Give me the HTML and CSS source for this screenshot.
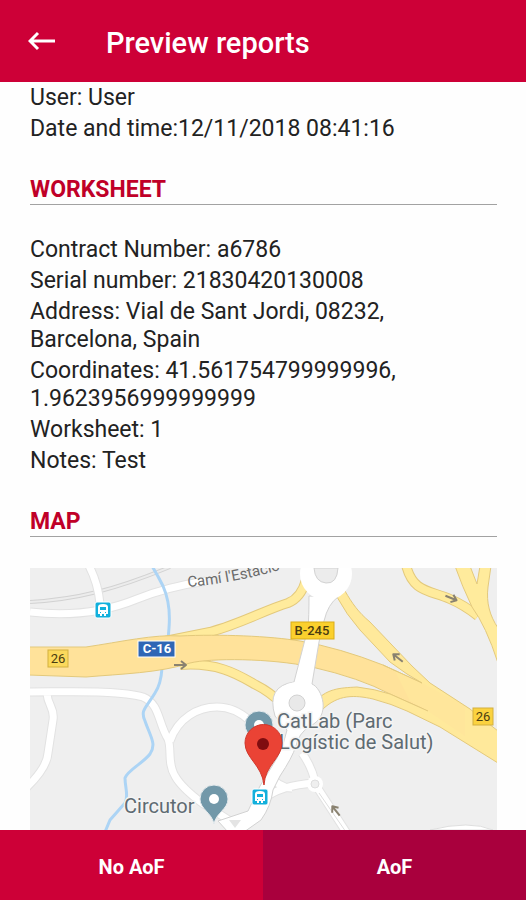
FILE: index.html
```html
<!DOCTYPE html>
<html lang="en">
<head>
  <meta charset="UTF-8" />
  <meta name="viewport" content="width=device-width, initial-scale=1.0" />
  <title>Preview reports</title>
  <link rel="stylesheet" href="styles.css">
</head>
<body>
  <header class="app-bar">
    <a class="back" href="#" aria-label="Back">
      <svg width="28" height="20" viewBox="0 0 28 20" aria-hidden="true">
        <path d="M27 10H2M10 2L2 10l8 8" />
      </svg>
    </a>
    <h1>Preview reports</h1>
  </header>

  <main class="report">
    <p>User: User</p>
    <p>Date and time:12/11/2018 08:41:16</p>

    <h2>WORKSHEET</h2>
    <p>Contract Number: a6786</p>
    <p>Serial number: 21830420130008</p>
    <p>Address: Vial de Sant Jordi, 08232, Barcelona, Spain</p>
    <p>Coordinates: 41.561754799999996, 1.9623956999999999</p>
    <p>Worksheet: 1</p>
    <p>Notes: Test</p>

    <h2>MAP</h2>
    <svg class="map" viewBox="0 0 467 262" role="img" aria-label="Map of the site">
      <defs>
        <g id="bus">
          <rect x="-8" y="-8" width="16" height="16" rx="2" fill="#12b0dc" stroke="#fff" />
          <path d="M-5 4v-7q0-3 5-3t5 3v7h-2v2h-2v-2h-2v2h-2v-2z" fill="#fff" />
          <path d="M-3 -3h6v3h-6zM-3 2h1v1h-1zM2 2h1v1h-1z" fill="#12b0dc" />
        </g>
        <g id="poi">
          <path d="M0 25C-2 14-14 10-14 0a14 14 0 0 1 28 0C14 10 2 14 0 25z" fill="#7298a9" stroke="#e4eaed" />
          <circle r="5" fill="#fff" />
        </g>
        <path id="arrow" d="M-6 0H6M1-4l5 4-5 4" />
        <path id="cami" d="M158 19C190 16 222 11 270-4" />
      </defs>
      <rect width="467" height="262" fill="#efefef" />

      <!-- railway -->
      <path class="rail" d="M0 34Q35 32 67 24T140-1" />
      <path class="rail-inner" d="M0 34Q35 32 67 24T140-1" />

      <!-- local streets, edge first -->
      <g class="street-edge">
        <path id="s1" d="M0 44C50 50 85 40 107 31S150 17 176 13M58-4Q68 14 70 36" />
        <path id="s2" d="M-2 124C40 124 90 122 113 129C130 136 128 155 138 171C142 180 137 195 145 208C150 217 160 226 172 235L205 256M140 173C148 150 168 139 187 139Q205 139 220 153M17 126C18 138 25 140 23 152Q21 165 18 185Q17 200-4 220" />
        <path id="s3" d="M272 185Q282 199 285 214M237 204Q248 220 262 220M232 232Q250 217 285 215M285 216L320 270" />
      </g>
      <g class="street">
        <use href="#s1" /><use href="#s2" /><use href="#s3" />
      </g>
      <path d="M400 262Q440 252 463 262z" fill="#fff" stroke="#dedede" />

      <!-- river -->
      <path class="river" d="M122-2Q128 8 133 18Q141 36 139 60L138 72M132 100Q131 116 125 125C116 140 110 142 115 153C120 168 127 176 120 186C112 196 98 202 95 210C95 220 99 228 95 235L80 252L75 264" />

      <!-- ramps -->
      <g class="ramp-edge">
        <path id="r1" d="M276 12Q271 30 258 35C235 42 210 56 180 64L130 74" />
        <path id="r2" d="M150 97C190 94 210 108 226 117Q240 124 252 136" />
        <path id="r4" d="M376-3C383 25 400 22 420 31Q434 37 448 48" />
      </g>
      <g class="ramp">
        <use href="#r1" /><use href="#r2" /><use href="#r4" />
      </g>
      <path class="light" d="M425-2Q432 18 442 39Q456 58 468 95V60C460 48 456 35 458 19L461-2H450L447 16L440-2z" />

      <!-- C-16 motorway -->
      <path class="motorway" d="M-2 79L56 79C90 74 125 66 150 68C190 66 240 68 270 73Q310 80 353 97L392 115L430 136V160L398 143L360 126Q330 110 282 99C240 90 180 90 160 95C130 105 90 106 56 109L-2 107z" />
      <path class="ramp-fill" d="M315 23C322 35 328 44 340 54L382 98L400 115L440 141L468 163V195L410 159L377 143Q362 136 343 131C325 127 308 126 292 142L283 136C296 120 310 120 327 119Q345 121 360 126L398 143L392 115L377 106L360 94L330 62Q316 46 307 29z" />
      <path class="join" d="M392 115L435 138V168L398 143L380 133L365 103z" />
      <path class="ramp-line" d="M315 23C322 35 328 44 340 54L382 98L400 115L440 141L468 163M307 29Q316 46 330 62L360 94L377 106L392 115M292 142C308 126 325 127 343 131Q362 136 377 143L410 159L468 195M283 136C296 120 310 120 327 119Q345 121 360 126L398 143M353 97L392 115" />

      <!-- B-245 and its roundabouts -->
      <path class="avenue" d="M279 28Q279 49 278 60L264 114Q236 118 245 148Q253 158 257 162Q254 177 247 190L230 218L218 243L188 253L198 264H214L231 252Q241 238 243 222L250 208Q262 190 266 178Q268 166 280 158C302 148 292 120 282 116L289 74L294 53Q298 36 308 29z" />
      <circle cx="296" cy="6" r="26" fill="#fff" />
      <path d="M284 0Q285 14 296 15T308 0z" fill="#ececec" stroke="#d2d2d2" />
      <circle cx="267" cy="137" r="23" fill="#fff" />
      <circle cx="267" cy="135" r="8" fill="#e9e9e9" stroke="#d2d2d2" />
      <circle cx="285" cy="216" r="8" fill="#fff" />
      <circle cx="285" cy="216" r="4" fill="#efefef" stroke="#dedede" />
      <path d="M199 252h12l-6 8z" fill="#e4e4e4" />
      <path d="M289 225L316 264" fill="none" stroke="#dedede" />

      <g class="arrows">
        <use href="#arrow" transform="translate(150 97)" />
        <use href="#arrow" transform="translate(421 30) rotate(22)" />
        <use href="#arrow" transform="translate(368 90) rotate(218)" />
        <use href="#arrow" transform="translate(306 243) rotate(232)" />
      </g>

      <!-- road shields -->
      <rect x="108" y="73" width="37" height="16" fill="#2f66b5" stroke="#fff" />
      <text class="shield motorway-no" x="127" y="85">C-16</text>
      <rect x="261" y="54" width="43" height="17" fill="#fbd02d" stroke="#d9ad1a" />
      <text class="shield" x="282" y="67">B-245</text>
      <rect x="18" y="82" width="20" height="17" fill="#fbd95c" stroke="#d3b03f" />
      <text class="shield exit" x="28" y="95">26</text>
      <rect x="443" y="140" width="20" height="17" fill="#fbd23f" stroke="#d3b03f" />
      <text class="shield exit" x="453" y="153">26</text>

      <!-- places -->
      <text class="street-name"><textPath href="#cami">Camí l'Estació</textPath></text>
      <text class="place" x="94" y="245">Circutor</text>
      <text class="place" x="247" y="160">CatLab (Parc</text>
      <text class="place" x="249" y="181">Logístic de Salut)</text>
      <use href="#bus" x="73" y="42" />
      <use href="#bus" x="230" y="229" />
      <use href="#poi" x="184" y="231" />
      <use href="#poi" x="229" y="157" />
      <path d="M234 217C232 197 215 190 215 175a18 18 0 0 1 37 0C252 190 235 197 234 217z" fill="#ea4335" stroke="#d0372b" />
      <circle cx="233" cy="176" r="6" fill="#7f0d10" />
    </svg>
  </main>

  <footer class="actions">
    <button type="button">No AoF</button>
    <button type="button" class="dark">AoF</button>
  </footer>
</body>
</html>
```
FILE: styles.css
```css
* { box-sizing: border-box; }
body {
  font-family: Roboto, sans-serif;
  margin: 0;
  height: 100vh;
  display: flex;
  flex-direction: column;
  background: #fefefe;
  color: #222;
}
.app-bar {
  flex: none;
  display: flex;
  align-items: center;
  gap: 50px;
  height: 82px;
  padding: 0 28px;
  background: #cd0037;
  color: #fff;
}
.back {
  display: flex;
}
.back svg {
  fill: none;
  stroke: #fff;
  stroke-width: 3;
}
.app-bar h1 {
  margin: 4px 0 0;
  font-size: 29px;
  font-weight: 500;
}
.report {
  flex: 1;
  min-height: 0;
  overflow: hidden;
  padding: 2px 29px 0 30px;
  font-size: 23px;
  line-height: 28px;
}
.report p {
  margin: 0 0 3px;
  padding-right: 16px;
}
.report h2 {
  margin: 33px 0 31px;
  border-bottom: 1px solid #a2a2a2;
  color: #c00028;
  font-size: 23px;
  font-weight: 700;
  line-height: 28px;
}
.map {
  display: block;
  width: 100%;
}
.map path,
.map use {
  stroke-linejoin: round;
}
.rail {
  fill: none;
  stroke: #d2d2d2;
  stroke-width: 4;
}
.rail-inner {
  fill: none;
  stroke: #ececec;
  stroke-width: 2;
}
.street-edge {
  fill: none;
  stroke: #e2e2e2;
  stroke-width: 9;
}
.street {
  fill: none;
  stroke: #fff;
  stroke-width: 7;
}
.river {
  fill: none;
  stroke: #acd4f5;
  stroke-width: 3;
}
.ramp-edge {
  fill: none;
  stroke: #e3c97c;
  stroke-width: 10;
}
.ramp {
  fill: none;
  stroke: #ffeb9c;
  stroke-width: 8;
}
.ramp-fill {
  fill: #ffe99b;
}
.ramp-line {
  fill: none;
  stroke: #e3c97c;
}
.join {
  fill: #ffe69b;
}
.light {
  fill: #ffeb9c;
  stroke: #e3c97c;
}
.motorway {
  fill: #ffe29a;
  stroke: #e3c97c;
}
.avenue {
  fill: #fff;
  stroke: #d2d2d2;
}
.arrows {
  fill: none;
  stroke: #8a8270;
  stroke-width: 2;
}
.shield {
  font-size: 13px;
  font-weight: 500;
  text-anchor: middle;
  fill: #4a3c10;
}
.motorway-no {
  font-weight: 700;
  fill: #fff;
}
.exit {
  font-weight: 400;
}
.street-name {
  font-size: 15px;
  fill: #6b6b6b;
}
.place {
  font-size: 20px;
  fill: #5f6b72;
  stroke: #f4f4f4;
  stroke-width: 3;
  paint-order: stroke;
}
.actions {
  flex: none;
  display: flex;
  height: 70px;
}
.actions button {
  flex: 1;
  padding: 4px 0 0;
  border: 0;
  background: #cd0037;
  color: #fff;
  font-family: inherit;
  font-size: 20px;
  font-weight: 700;
}
.actions .dark {
  background: #a9003d;
}
```
